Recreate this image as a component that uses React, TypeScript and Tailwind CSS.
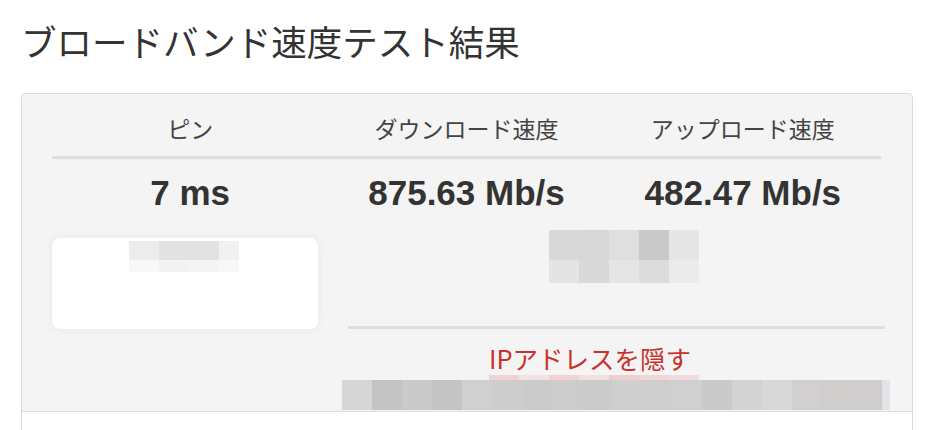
import React from "react";

const jp = { fontFamily: '"Noto Sans CJK JP", "Noto Sans", sans-serif' };
const arial = { fontFamily: '"Liberation Sans", Arial, sans-serif' };

const midBlur = [
  ["#d9d9d9", "#d8d8d8", "#dfdfdf", "#c9c9c9", "#e6e6e6"],
  ["#e4e4e4", "#d9d9d9", "#e5e5e5", "#dcdcdc", "#ebebeb"],
];

const boxBlur = [
  ["#ececec", "#e2e2e2", "#e2e2e2", "#f1f1f3"],
  ["#f8f8f8", "#f2f2f2", "#f4f4f4", "#f8f8f8"],
];

const barBlur = [
  "#d6d6d6", "#c4c4c4", "#cacaca", "#c4c4c4", "#d0d0d0", "#cdcdcd", "#cbcbcb",
  "#cccccc", "#cbcbcb", "#cfcfcf", "#cecece", "#d0d0d0", "#c9cac9", "#d3d3d3",
  "#d8d8d8", "#d1cfcf", "#d0cecd", "#cfcdcd",
];

const pinkBlur = ["#f0d4d4", "#f3e2e2", "#efd2d2", "#f2dfdf", "#eecfcf", "#f0d6d6", "#f1dada"];

export default function App() {
  const labels = ["ピン", "ダウンロード速度", "アップロード速度"];
  const values = ["7 ms", "875.63 Mb/s", "482.47 Mb/s"];

  return (
    <div className="w-[930px] h-[430px] overflow-hidden bg-white pl-[21px]">
      <h1 className="mt-[16px] mb-[27px] text-[35.5px] leading-[50px] text-[#333] font-normal" style={jp}>
        ブロードバンド速度テスト結果
      </h1>

      <div className="w-[892px] rounded-t-[4px] border border-[#dddddd]">
        <div className="bg-[#f4f4f4] pl-[30px] pr-[31px] pb-[1px] rounded-t-[4px]">
          <div className="grid grid-cols-3 pt-[18px] pb-[12px]">
            {labels.map((l) => (
              <div key={l} className="text-center text-[23px] leading-[32px] text-[#444]" style={jp}>
                {l}
              </div>
            ))}
          </div>
          <div className="h-[3px] bg-[#dddddd]" />
          <div className="grid grid-cols-3 mt-[14px]">
            {values.map((v) => (
              <div key={v} className="text-center text-[35px] leading-[40px] font-bold text-[#333]" style={arial}>
                {v}
              </div>
            ))}
          </div>

          <div className="flex items-start">
            <div className="shrink-0 mt-[25px] w-[266px] h-[91px] rounded-[8px] bg-white shadow-[0_0_8px_rgba(0,0,0,0.06)] pt-[3px] pl-[77px]">
              {boxBlur.map((row, i) => (
                <div key={i} className={i === 0 ? "flex h-[19px]" : "flex h-[12px]"}>
                  {row.map((c, j) => (
                    <div key={j} className={j === 3 ? "w-[20px]" : "w-[30px]"} style={{ background: c }} />
                  ))}
                </div>
              ))}
            </div>

            <div className="shrink-0 ml-[24px] w-[548px] mt-[17px] flex flex-col">
              <div className="ml-[207px]">
                {midBlur.map((row, i) => (
                  <div key={i} className={i === 0 ? "flex h-[30px]" : "flex h-[23px]"}>
                    {row.map((c, j) => (
                      <div key={j} className="w-[30px]" style={{ background: c }} />
                    ))}
                  </div>
                ))}
              </div>
              <div className="mt-[43px] ml-[6px] w-[537px] h-[3px] bg-[#dddddd]" />
              <div className="mt-[14px] ml-[147px] text-[25.5px] leading-[30px] text-[#c7332b]" style={jp}>
                IPアドレスを隠す
              </div>
              <div className="mt-[2px] ml-[147px] flex h-[5px]">
                {pinkBlur.map((c, j) => (
                  <div key={j} className="w-[30px]" style={{ background: c }} />
                ))}
              </div>
              <div className="flex h-[30px]">
                {barBlur.map((c, j) => (
                  <div key={j} className="w-[30px]" style={{ background: c }} />
                ))}
                <div className="w-[8px] bg-[#e2e5e8]" />
              </div>
            </div>
          </div>
        </div>
        <div className="border-t border-[#dddddd] h-[40px] bg-white" />
      </div>
    </div>
  );
}
